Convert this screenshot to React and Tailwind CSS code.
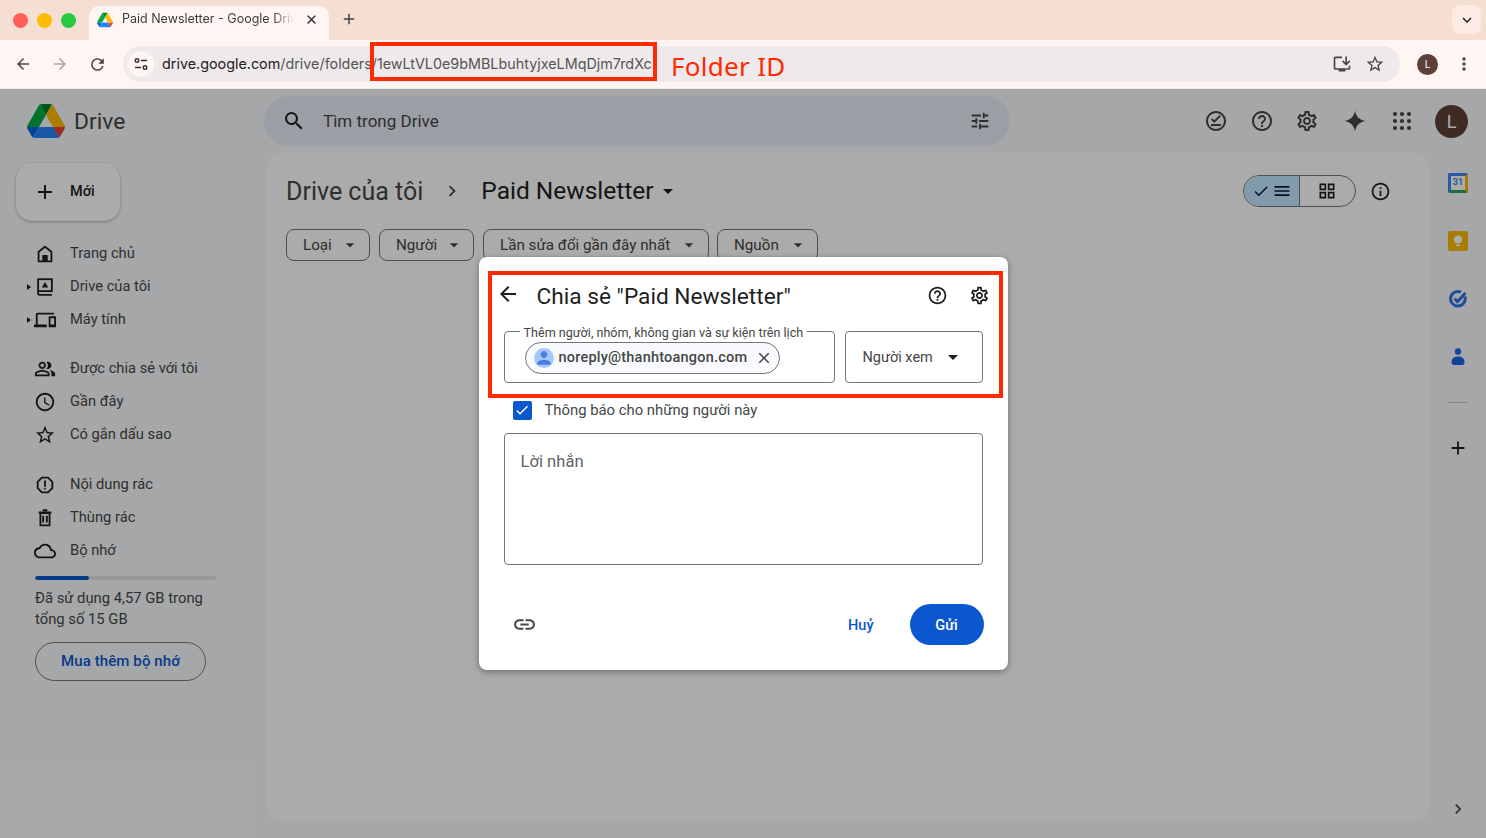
import React from 'react'
import {
  MdAdd, MdArrowBack, MdArrowDropDown, MdArrowForward, MdCheck, MdChevronRight, MdClose, MdExpandMore,
  MdHelpOutline, MdLink, MdMenu, MdMoreVert, MdOutlineAccessTime, MdOutlineCloud, MdOutlineDevices,
  MdOutlineGridView, MdOutlineInfo, MdOutlineInstallDesktop, MdOutlineOfflinePin, MdOutlinePeopleAlt,
  MdOutlineReport, MdOutlineSettings, MdPerson, MdRefresh, MdSearch, MdStarBorder, MdTune,
} from 'react-icons/md'

function DriveLogo({ className }) {
  return (
    <svg viewBox="0 0 87.3 78" className={className}>
      <path d="m6.6 66.85 3.85 6.65c.8 1.4 1.95 2.5 3.3 3.3l13.75-23.8h-27.5c0 1.55.4 3.1 1.2 4.5z" fill="#0066da" />
      <path d="m43.65 25-13.75-23.8c-1.35.8-2.5 1.9-3.3 3.3l-25.4 44a9.06 9.06 0 0 0 -1.2 4.5h27.5z" fill="#00ac47" />
      <path d="m73.55 76.8c1.35-.8 2.5-1.9 3.3-3.3l1.6-2.75 7.65-13.25c.8-1.4 1.2-2.95 1.2-4.5h-27.5l5.85 11.5z" fill="#ea4335" />
      <path d="m43.65 25 13.75-23.8c-1.35-.8-2.9-1.2-4.5-1.2h-18.5c-1.6 0-3.15.45-4.5 1.2z" fill="#00832d" />
      <path d="m59.8 53h-32.3l-13.75 23.8c1.35.8 2.9 1.2 4.5 1.2h50.8c1.6 0 3.15-.45 4.5-1.2z" fill="#2684fc" />
      <path d="m73.4 26.5-12.7-22c-.8-1.4-1.95-2.5-3.3-3.3l-13.75 23.8 16.15 28h27.45c0-1.55-.4-3.1-1.2-4.5z" fill="#ffba00" />
    </svg>
  )
}

function MyDriveIcon() {
  return (
    <svg viewBox="0 0 24 24" className="w-[22px] h-[22px]" fill="none">
      <rect x="4.5" y="3.5" width="15" height="13" stroke="currentColor" strokeWidth="2" />
      <path d="M4.5 16.5v2.5a1.5 1.5 0 0 0 1.5 1.5h13.5" stroke="currentColor" strokeWidth="2" />
      <path d="M12 6.5 15.5 12.5h-7z" fill="currentColor" />
    </svg>
  )
}

function HomeIcon() {
  return (
    <svg viewBox="0 0 24 24" className="w-[22px] h-[22px]" fill="none">
      <path d="M12 4 5 9.5V20h14V9.5z" stroke="currentColor" strokeWidth="2" strokeLinejoin="round" />
      <path d="M9 20v-6a1 1 0 0 1 1-1h4a1 1 0 0 1 1 1v6z" fill="currentColor" />
    </svg>
  )
}

function TrashIcon() {
  return (
    <svg viewBox="0 0 24 24" className="w-[22px] h-[22px]" fill="none" stroke="currentColor" strokeWidth="2">
      <path d="M7 6.5h10V20H7zM5 6h14M9.5 3.5h5M10 9.5v7.5M14 9.5v7.5" />
    </svg>
  )
}

function SiteControlsIcon() {
  return (
    <svg viewBox="0 0 16 16" className="w-4 h-4" fill="none" stroke="#333" strokeWidth="1.4">
      <circle cx="4" cy="4.5" r="1.8" />
      <path d="M8 4.5h6M2 11.5h6" />
      <circle cx="12" cy="11.5" r="1.8" />
    </svg>
  )
}

function AppsIcon() {
  const dots = [5, 12, 19]
  return (
    <svg viewBox="0 0 24 24" className="ml-[23px] w-6 h-6" fill="currentColor">
      {dots.map((y) => dots.map((x) => <circle key={`${x}-${y}`} cx={x} cy={y} r="2.1" />))}
    </svg>
  )
}

function NavItem({ icon, label, caret }) {
  return (
    <div className="relative flex items-center h-[33px] pl-[33px] text-[#444746]">
      {caret && <span className="absolute left-[27px] w-0 h-0 border-y-[3px] border-y-transparent border-l-[4px] border-l-[#1f1f1f]" />}
      <span className="w-6 h-6 flex items-center justify-center text-[#1f1f1f] text-[22px]">{icon}</span>
      <span className="ml-[13px] text-[14.7px]">{label}</span>
    </div>
  )
}

function FilterChip({ label, width }) {
  return (
    <div className={`${width} h-8 rounded-lg border border-[#747775] flex items-center justify-between pl-4 pr-[9px] text-[15.2px] text-[#444746]`}>
      <span>{label}</span>
      <MdArrowDropDown className="text-[20px]" />
    </div>
  )
}

function BrowserChrome() {
  return (
    <div className="h-[89px] shrink-0 flex flex-col bg-[#f5dfd3] font-['Inter',sans-serif]">
      <div className="h-10 flex items-end pl-[13px] pr-[5px]">
        <div className="flex items-center gap-[9px] h-10 w-[76px]">
          <span className="w-[15px] h-[15px] rounded-full bg-[#ff5f57]" />
          <span className="w-[15px] h-[15px] rounded-full bg-[#febc00]" />
          <span className="w-[15px] h-[15px] rounded-full bg-[#28c840]" />
        </div>
        <div className="w-[240px] h-[34px] rounded-t-[10px] bg-[#fff6f3] flex items-center pl-[8px] pr-[10px] pb-[7px]">
          <DriveLogo className="w-4 h-4 shrink-0" />
          <span className="ml-[9px] text-[12.5px] text-[#3c3c3c] w-[172px] whitespace-nowrap overflow-hidden [mask-image:linear-gradient(to_right,black_88%,transparent)]">Paid Newsletter - Google Drive</span>
          <MdClose className="ml-auto text-[15px] text-[#222]" />
        </div>
        <MdAdd className="ml-[11px] mb-[12px] text-[18px] text-[#444]" />
        <div className="ml-auto mb-[6px] w-[29px] h-[29px] rounded-lg bg-[#fbebe3] flex items-center justify-center">
          <MdExpandMore className="text-[18px] text-[#222]" />
        </div>
      </div>
      <div className="h-[49px] bg-[#fff6f3] border-b border-[#f1e6e1] flex items-center pl-[14px] pr-[12px] text-[#474747]">
        <MdArrowBack className="text-[18px]" />
        <MdArrowForward className="ml-[19px] text-[18px] text-[#a8a5a4]" />
        <MdRefresh className="ml-[19px] text-[19px]" />
        <div className="ml-[16px] w-[1277px] h-9 rounded-full bg-[#eee9eb] flex items-center pl-[5px] pr-[15px]">
          <span className="w-[26px] h-[26px] rounded-full bg-[#fff6f3] flex items-center justify-center">
            <SiteControlsIcon />
          </span>
          <span className="ml-[8px] text-[14.35px] text-[#222]">
            drive.google.com<span className="text-[#555]">/drive/folders/1ewLtVL0e9bMBLbuhtyjxeLMqDjm7rdXc</span>
          </span>
          <MdOutlineInstallDesktop className="ml-auto text-[20px]" />
          <MdStarBorder className="ml-[13px] text-[20px]" />
        </div>
        <span className="ml-[17px] w-[21px] h-[21px] rounded-full bg-[#5d4037] text-white text-[10px] flex items-center justify-center">L</span>
        <MdMoreVert className="ml-[16px] text-[20px]" />
      </div>
    </div>
  )
}

function Sidebar() {
  return (
    <div className="w-[266px] shrink-0 flex flex-col">
      <div className="h-[64px] flex items-center pl-[27px]">
        <DriveLogo className="w-[38px] h-[34px]" />
        <span className="ml-[9px] pt-[3px] text-[22.8px] text-[#444746]">Drive</span>
      </div>
      <div className="ml-4 mt-[10px] w-[104px] h-[58px] rounded-2xl bg-white shadow-[0_1px_3px_rgba(0,0,0,0.3)] flex items-center pl-[17px] text-[#1f1f1f]">
        <MdAdd className="text-[24px]" />
        <span className="ml-[13px] text-[14.5px] font-medium">Mới</span>
      </div>
      <div className="mt-[16px]">
        <NavItem icon={<HomeIcon />} label="Trang chủ" />
        <NavItem icon={<MyDriveIcon />} label="Drive của tôi" caret />
        <NavItem icon={<MdOutlineDevices />} label="Máy tính" caret />
      </div>
      <div className="mt-[16px]">
        <NavItem icon={<MdOutlinePeopleAlt />} label="Được chia sẻ với tôi" />
        <NavItem icon={<MdOutlineAccessTime />} label="Gần đây" />
        <NavItem icon={<MdStarBorder />} label="Có gắn dấu sao" />
      </div>
      <div className="mt-[17px]">
        <NavItem icon={<MdOutlineReport />} label="Nội dung rác" />
        <NavItem icon={<TrashIcon />} label="Thùng rác" />
        <NavItem icon={<MdOutlineCloud />} label="Bộ nhớ" />
      </div>
      <div className="ml-[35px] mt-[9px] w-[181px] h-1 rounded-full bg-[#e3e3e3] overflow-hidden">
        <div className="w-[54px] h-full rounded-full bg-[#0b57d0]" />
      </div>
      <p className="ml-[35px] mt-[8px] w-[190px] text-[14.8px] leading-[21px] text-[#444746]">Đã sử dụng 4,57 GB trong tổng số 15 GB</p>
      <div className="ml-[35px] mt-[12px] w-[171px] h-[39px] rounded-full border border-[#747775] flex items-center justify-center text-[15px] tracking-[0.1px] font-medium text-[#0b57d0]">Mua thêm bộ nhớ</div>
    </div>
  )
}

function RightRail() {
  return (
    <div className="w-[56px] shrink-0 flex flex-col items-center pt-[20px] relative">
      <div className="relative w-5 h-5 rounded-[2px] bg-white border-[3px] border-[#4285f4] border-r-[#fbbc04] border-b-[#34a853] flex items-center justify-center text-[9px] font-bold text-[#4285f4]">31</div>
      <div className="mt-[38px] w-5 h-5 rounded-[2px] bg-[#fbbc04] flex items-center justify-center">
        <svg viewBox="0 0 20 20" className="w-5 h-5"><circle cx="10" cy="8.5" r="4" fill="#fff" /><rect x="8" y="13.5" width="4" height="1.6" fill="#fff" /></svg>
      </div>
      <svg viewBox="0 0 20 20" className="mt-[38px] w-5 h-5" fill="none">
        <path d="M16.8 7.5A7.3 7.3 0 1 1 13 3.2" stroke="#2f74e8" strokeWidth="3" />
        <path d="M6.5 9.5 9.5 12.5 17.5 4" stroke="#2f74e8" strokeWidth="3" />
      </svg>
      <svg viewBox="0 0 20 20" className="mt-[38px] w-5 h-5" fill="#1a66e0">
        <circle cx="10" cy="4.5" r="3.2" />
        <path d="M3.5 15.5C3.5 11 6.5 9.5 10 9.5s6.5 1.5 6.5 6c0 1.5-1 2.5-2.5 2.5H6c-1.5 0-2.5-1-2.5-2.5z" />
      </svg>
      <div className="mt-[35px] w-5 border-t border-[#c7c7c7]" />
      <MdAdd className="mt-[34px] text-[22px] text-[#1f1f1f]" />
      <MdChevronRight className="absolute bottom-[19px] text-[20px] text-[#444746]" />
    </div>
  )
}

function MainPanel() {
  return (
    <div className="flex-1 rounded-2xl bg-white mb-4 pl-5 pr-[40px] pt-[20px]">
      <div className="h-9 flex items-center">
        <span className="pt-[1px] text-[25px] text-[#444746]">Drive của tôi</span>
        <MdChevronRight className="ml-[18px] text-[22px] text-[#444746]" />
        <span className="ml-[18px] pt-[1px] text-[24.5px] text-[#1f1f1f]">Paid Newsletter</span>
        <MdArrowDropDown className="ml-[2px] text-[24px] text-[#1f1f1f]" />
        <div className="ml-auto flex items-center">
          <div className="w-[113px] h-8 rounded-full border border-[#747775] flex overflow-hidden">
            <div className="w-14 bg-[#c2e7ff] border-r border-[#747775] flex items-center justify-center text-[#001d35]">
              <MdCheck className="text-[18px]" />
              <MdMenu className="ml-[2px] text-[20px]" />
            </div>
            <div className="flex-1 flex items-center justify-center text-[#1f1f1f]">
              <MdOutlineGridView className="-ml-[2px] text-[20px]" />
            </div>
          </div>
          <MdOutlineInfo className="ml-[14px] mr-[-1px] text-[21px] text-[#1f1f1f]" />
        </div>
      </div>
      <div className="mt-5 flex gap-[9px]">
        <FilterChip label="Loại" width="w-[84px]" />
        <FilterChip label="Người" width="w-[95px]" />
        <FilterChip label="Lần sửa đổi gần đây nhất" width="w-[226px]" />
        <div className="-ml-[1px]">
          <FilterChip label="Nguồn" width="w-[101px]" />
        </div>
      </div>
    </div>
  )
}

function ShareDialog() {
  return (
    <div className="w-[529px] h-[413px] rounded-lg bg-white shadow-[0_2px_6px_rgba(0,0,0,0.35)] flex flex-col px-[25px] text-[#1f1f1f]">
      <div className="mt-[20px] h-9 flex items-center -mx-[1px]">
        <MdArrowBack className="-ml-[7px] -mt-[3px] text-[24px] text-[#1f1f1f]" />
        <span className="ml-[17px] pt-[4px] text-[22.7px]">Chia sẻ "Paid Newsletter"</span>
        <MdHelpOutline className="ml-auto -translate-x-[1px] text-[21px] text-[#1f1f1f]" />
        <MdOutlineSettings className="ml-[20px] -mr-[6px] text-[21px] text-[#1f1f1f]" />
      </div>
      <div className="mt-[18px] flex gap-[10px]">
        <div className="relative w-[331px] h-[52px] rounded-[4px] border border-[#747775] flex items-center pl-5">
          <span className="absolute -top-[6px] left-[15px] bg-white px-[4px] text-[12.6px] leading-[14px] text-[#444746] whitespace-nowrap">Thêm người, nhóm, không gian và sự kiện trên lịch</span>
          <div className="mt-[1px] w-[255px] h-8 rounded-full border border-[#747775] bg-[#f8fafd] flex items-center pl-2 pr-[6px]">
            <span className="w-[20px] h-[20px] rounded-full bg-[#a8c7fa] overflow-hidden flex items-center justify-center">
              <MdPerson className="text-[22px] text-[#4a7fe0]" />
            </span>
            <span className="ml-[5px] text-[14.5px] font-medium tracking-[0.22px] text-[#444746]">noreply@thanhtoangon.com</span>
            <MdClose className="ml-auto text-[18px] text-[#444746]" />
          </div>
        </div>
        <div className="w-[138px] h-[52px] rounded-[4px] border border-[#747775] flex items-center pl-[17px] pr-[17px] text-[14.5px] text-[#444746]">
          <span className="pt-[2px]">Người xem</span>
          <MdArrowDropDown className="ml-auto text-[24px] text-[#1f1f1f]" />
        </div>
      </div>
      <div className="mt-[17px] h-5 flex items-center pl-[9px]">
        <span className="w-[19px] h-[19px] rounded-[2px] bg-[#0b57d0] flex items-center justify-center">
          <MdCheck className="text-[16px] text-white" />
        </span>
        <span className="ml-[13px] text-[14.85px] text-[#444746]">Thông báo cho những người này</span>
      </div>
      <div className="mt-[13px] w-[479px] h-[132px] rounded-[4px] border border-[#747775] pl-4 pt-[18px] text-[16.6px] leading-5 text-[#5f6368]">Lời nhắn</div>
      <div className="mt-[39px] h-[41px] flex items-center pl-2 -mr-[1px]">
        <MdLink className="text-[25px] text-[#444746]" />
        <span className="ml-auto pt-[2px] text-[14.5px] font-medium text-[#0b57d0]">Huỷ</span>
        <span className="ml-[36px] pt-[2px] w-[74px] h-[41px] rounded-full bg-[#0b57d0] flex items-center justify-center text-[14.5px] font-medium text-white">Gửi</span>
      </div>
    </div>
  )
}

export default function App() {
  return (
    <div className="relative h-screen flex flex-col overflow-hidden bg-[#f8fafd] font-['Roboto',sans-serif]">
      <BrowserChrome />
      <div className="relative flex-1 flex min-h-0">
        <Sidebar />
        <div className="flex-1 flex flex-col min-w-0">
          <div className="h-[64px] shrink-0 flex items-center">
            <div className="-ml-[2px] w-[746px] h-[50px] rounded-full bg-[#e9eef6] flex items-center pl-[18px] pr-[19px] text-[#444746]">
              <MdSearch className="text-[24px] text-[#1f1f1f]" />
              <span className="ml-[17px] pt-[2px] text-[17px]">Tìm trong Drive</span>
              <MdTune className="ml-auto text-[22px]" />
            </div>
            <div className="ml-auto mr-[18px] flex items-center text-[#444746]">
              <MdOutlineOfflinePin className="text-[24px]" />
              <MdHelpOutline className="ml-[22px] text-[24px]" />
              <MdOutlineSettings className="ml-[21px] text-[24px]" />
              <svg viewBox="0 0 24 24" className="ml-[24px] w-6 h-6" fill="currentColor">
                <path d="M12 1.5C12.9 7.5 16.5 11.1 22.5 12 16.5 12.9 12.9 16.5 12 22.5 11.1 16.5 7.5 12.9 1.5 12 7.5 11.1 11.1 7.5 12 1.5Z" />
              </svg>
              <AppsIcon />
              <span className="ml-[21px] w-[33px] h-[33px] rounded-full bg-[#5d4037] text-white text-[18px] flex items-center justify-center">L</span>
            </div>
          </div>
          <div className="flex-1 flex min-h-0">
            <MainPanel />
            <RightRail />
          </div>
        </div>
        <div className="absolute inset-0 bg-black/[0.33] flex items-center justify-center">
          <ShareDialog />
        </div>
      </div>
      <div className="absolute left-[370px] top-[42px] w-[287px] h-[39px] border-4 border-[#ff2a00]" />
      <span className="absolute left-[671px] top-[48px] text-[26px] leading-9 tracking-[0.3px] text-[#ff2a00] font-['Noto_Sans',sans-serif]">Folder ID</span>
      <div className="absolute left-[488px] top-[271px] w-[515px] h-[127px] border-4 border-[#ff2a00]" />
    </div>
  )
}
